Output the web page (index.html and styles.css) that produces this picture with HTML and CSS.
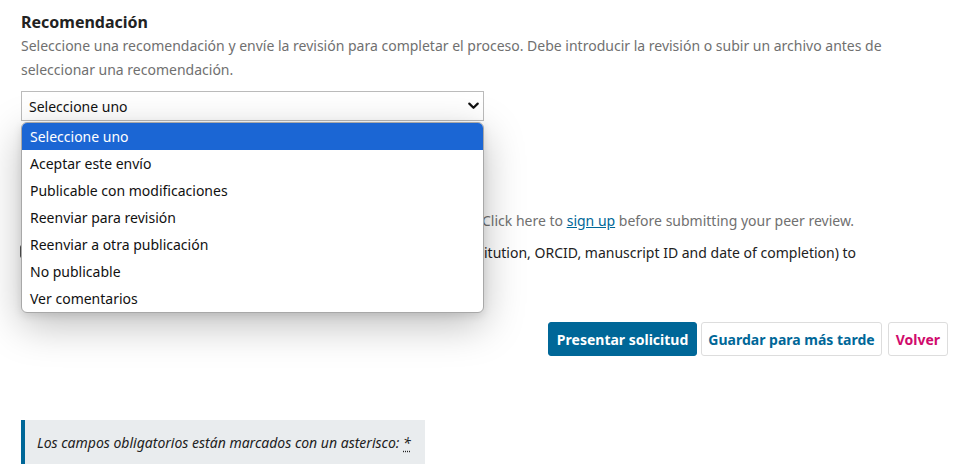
FILE: index.html
```html
<!DOCTYPE html>
<html lang="es">
<head>
<meta charset="utf-8">
<title>Recomendación</title>
<link rel="stylesheet" href="styles.css">
</head>
<body>
<div class="page">
  <section class="field">
    <h3 class="field-title">Recomendación</h3>
    <p class="field-desc">Seleccione una recomendación y envíe la revisión para completar el proceso. Debe introducir la revisión o subir un archivo antes de seleccionar una recomendación.</p>
    <div class="select">
      <span>Seleccione uno</span>
      <svg class="chev" width="11" height="8" viewBox="0 0 11 8"><path d="M1.3 1.6 L5.5 5.8 L9.7 1.6" fill="none" stroke="#111" stroke-width="2.2" stroke-linecap="round" stroke-linejoin="round"/></svg>
    </div>
  </section>

  <section class="publons">
    <p class="pub-note"><span class="lead"></span>Click here to <a href="#">sign up</a> before submitting your peer review.</p>
    <label class="pub-check">
      <span class="box"></span>
      <span class="pub-text"><span class="clip"></span>itution, ORCID, manuscript ID and date of completion) to</span>
    </label>
  </section>

  <div class="actions">
    <button class="btn btn-primary">Presentar solicitud</button>
    <button class="btn btn-secondary">Guardar para más tarde</button>
    <button class="btn btn-cancel">Volver</button>
  </div>

  <div class="required-note">Los campos obligatorios están marcados con un asterisco: <abbr title="obligatorio">*</abbr></div>

  <ul class="popup">
    <li class="opt selected">Seleccione uno</li>
    <li class="opt">Aceptar este envío</li>
    <li class="opt">Publicable con modificaciones</li>
    <li class="opt">Reenviar para revisión</li>
    <li class="opt">Reenviar a otra publicación</li>
    <li class="opt">No publicable</li>
    <li class="opt">Ver comentarios</li>
  </ul>
</div>
</body>
</html>
```
FILE: styles.css
```css
* { box-sizing: border-box; }
html, body { margin: 0; background: #fff; }
body {
  font-family: "Noto Sans", "Open Sans", sans-serif;
  font-size: 14px;
  color: #222;
  overflow: hidden;
}
.page {
  position: relative;
  padding: 12px 25px 0 21px;
  height: 465px;
}
.field-title {
  margin: 0 0 2px;
  font-size: 16px;
  line-height: 20px;
  font-weight: 700;
  color: #222;
}
.field-desc {
  margin: 0;
  line-height: 24px;
  color: #707070;
}
.select {
  margin-top: 9px;
  width: 463px;
  height: 30px;
  border: 1px solid #bbb;
  display: flex;
  align-items: center;
  justify-content: space-between;
  padding: 0 4px 0 7px;
  color: #111;
}
.chev { display: block; }

.publons { margin-top: 88px; }
.pub-note {
  margin: 0;
  line-height: 24px;
  color: #707070;
}
.pub-note .lead { display: inline-block; width: 461px; height: 1px; vertical-align: top; }
.pub-note a { color: #006798; text-decoration: underline; }
.pub-check {
  display: flex;
  align-items: flex-start;
  margin-top: 8px;
  min-height: 48px;
  line-height: 24px;
  color: #222;
}
.box {
  flex: none;
  width: 13px;
  height: 13px;
  margin: 4px 0 0 -1px;
  border: 2px solid #555;
  border-radius: 2px;
}
.clip {
  display: inline-block;
  width: 451px;
  height: 1px;
  vertical-align: top;
}

.actions {
  margin-top: 33px;
  display: flex;
  justify-content: flex-end;
  gap: 4px;
}
.btn {
  font-family: inherit;
  font-size: 14px;
  font-weight: 700;
  height: 34px;
  padding: 0 8px;
  border-radius: 3px;
  cursor: pointer;
}
.btn-primary { background: #006798; color: #fff; border: 1px solid #006798; }
.btn-secondary { background: #fff; color: #006798; border: 1px solid #ddd; padding: 0 6px; }
.btn-cancel { background: #fff; color: #d00a6c; border: 1px solid #ddd; margin-left: 2px; padding: 0 7px; }

.required-note {
  margin-top: 64px;
  display: inline-block;
  background: #e9ecee;
  border-left: 4px solid #006798;
  padding: 11px 14px 9px 12px;
  line-height: 24px;
  font-style: italic;
  color: #222;
}
.required-note abbr { text-decoration: underline dotted; text-underline-offset: 3px; }

.popup {
  position: absolute;
  top: 122px;
  left: 21px;
  width: 463px;
  margin: 0;
  padding: 0;
  list-style: none;
  background: #fff;
  border: 1px solid #a8a8a8;
  border-radius: 6px;
  overflow: hidden;
  box-shadow: 0 12px 40px rgba(0,0,0,0.26), 0 3px 8px rgba(0,0,0,0.10);
}
.opt {
  height: 27px;
  line-height: 27px;
  padding-left: 8px;
  color: #111;
}
.opt.selected { background: #1b66d4; color: #fff; }
```
